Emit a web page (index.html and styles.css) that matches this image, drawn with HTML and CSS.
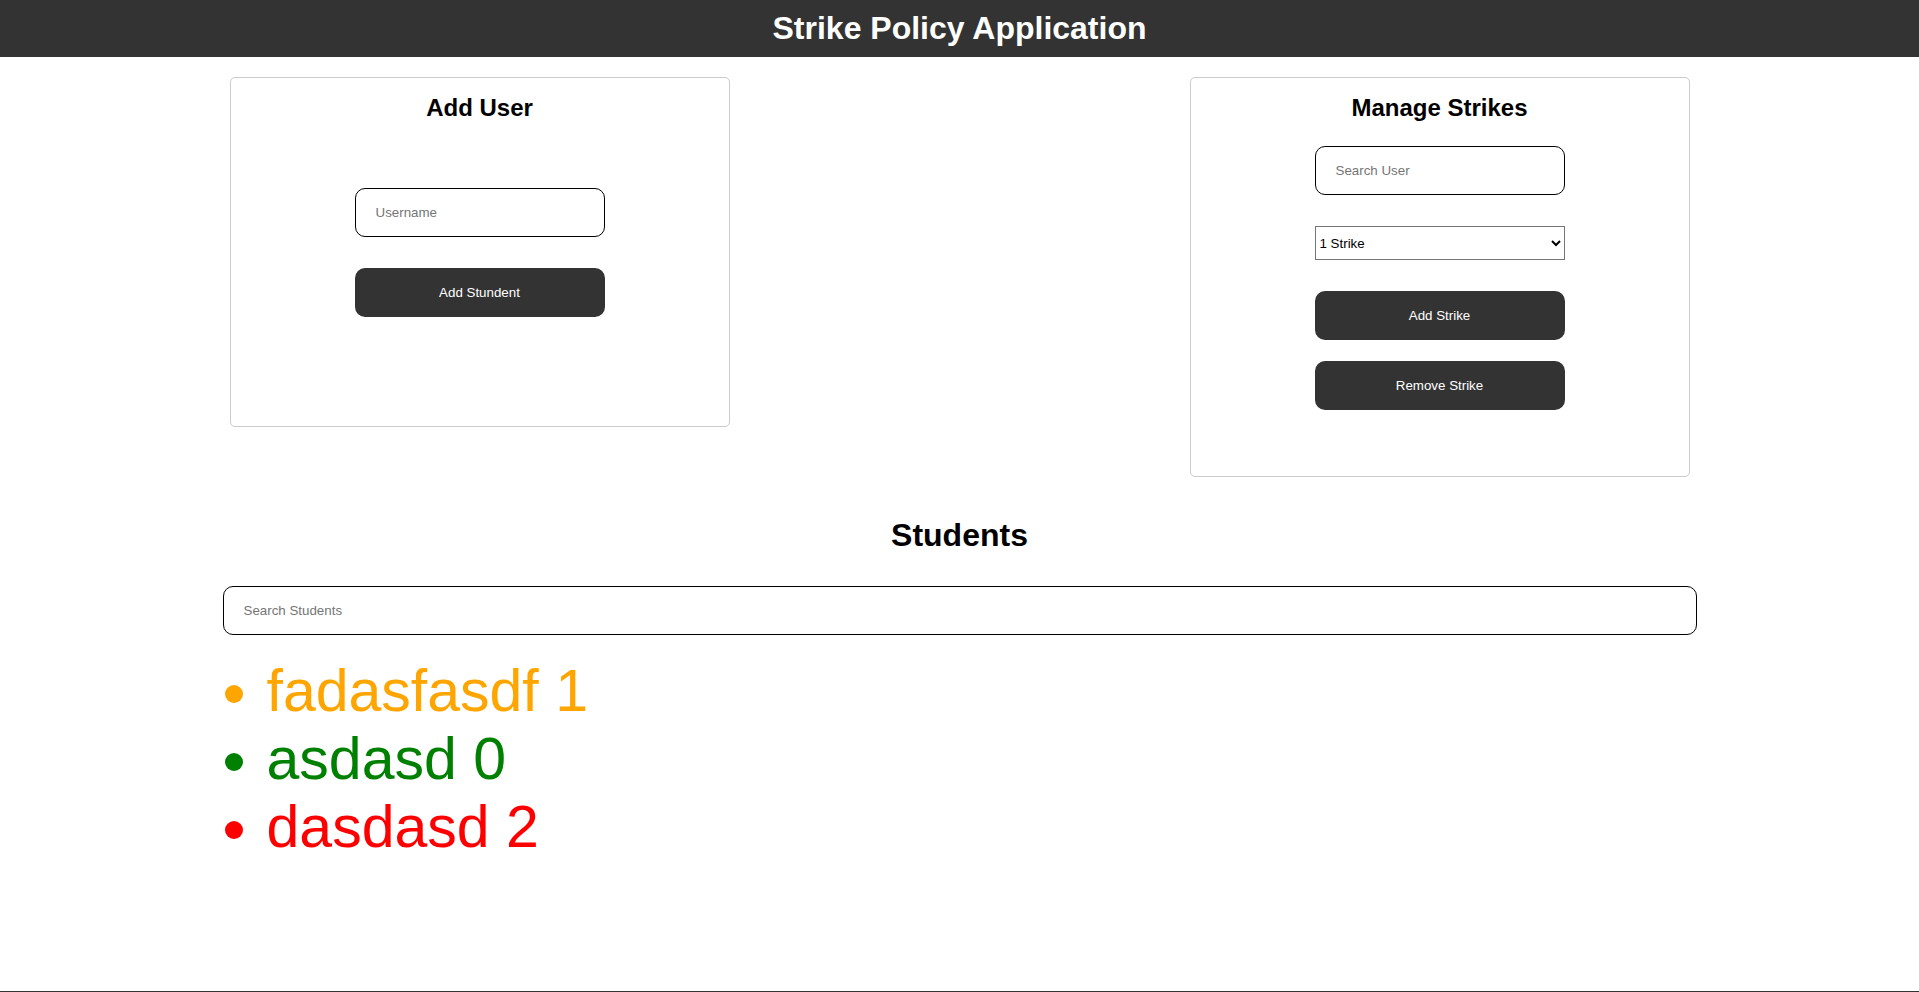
FILE: index.html
```html
<!DOCTYPE html>
<html lang="en">
<head>
<meta charset="utf-8">
<title>Strike Policy Application</title>
<link rel="stylesheet" href="styles.css">
</head>
<body>
<div class="page-body">
  <header class="app-header">
    <h1 class="app-title">Strike Policy Application</h1>
  </header>
  <main class="container">
    <section class="panels">
      <div class="card card-add">
        <h2 class="card-title">Add User</h2>
        <input class="field username-field" type="text" placeholder="Username">
        <button class="btn add-student-btn">Add Stundent</button>
      </div>
      <div class="card card-strikes">
        <h2 class="card-title">Manage Strikes</h2>
        <input class="field search-user-field" type="text" placeholder="Search User">
        <select class="strike-select">
          <option>1 Strike</option>
          <option>2 Strikes</option>
          <option>3 Strikes</option>
        </select>
        <button class="btn add-strike-btn">Add Strike</button>
        <button class="btn remove-strike-btn">Remove Strike</button>
      </div>
    </section>
    <section class="students">
      <h1 class="students-title">Students</h1>
      <input class="field search-students" type="text" placeholder="Search Students">
      <ul class="student-list">
        <li class="student strikes-1">fadasfasdf 1</li>
        <li class="student strikes-0">asdasd 0</li>
        <li class="student strikes-2">dasdasd 2</li>
      </ul>
    </section>
  </main>
</div>
<footer class="app-footer"></footer>
</body>
</html>
```

FILE: styles.css
```css
html, body {
  margin: 0;
  padding: 0;
  background: #fff;
}

body {
  font-family: "Liberation Sans", Arial, sans-serif;
  color: #000;
}

.page-body {
  min-height: 991px;
  display: flex;
  flex-direction: column;
}

.app-header {
  background: #333;
  padding: 10px;
}

.app-title {
  margin: 0;
  color: #fff;
  font-size: 32px;
  font-weight: bold;
  text-align: center;
  line-height: normal;
}

.container {
  flex: 1;
  width: 1474px;
  margin: 0 auto;
}

.panels {
  display: flex;
  justify-content: space-between;
  align-items: flex-start;
  padding: 0 7px;
  margin-top: 20px;
}

.card {
  width: 500px;
  box-sizing: border-box;
  border: 1px solid #ccc;
  border-radius: 5px;
  display: flex;
  flex-direction: column;
  align-items: center;
  padding-top: 16px;
}

.card-add {
  padding-bottom: 109px;
}

.card-strikes {
  padding-bottom: 66px;
}

.card-title {
  margin: 0;
  font-size: 24px;
  font-weight: bold;
  line-height: normal;
}

.field {
  box-sizing: border-box;
  height: 49px;
  padding: 0 20px;
  border: 1px solid #000;
  border-radius: 10px;
  font-family: "Liberation Sans", Arial, sans-serif;
  font-size: 13.33px;
  color: #000;
  background: #fff;
  outline: none;
}

.field::placeholder {
  color: #757575;
}

.username-field,
.search-user-field {
  width: 250px;
}

.username-field {
  margin-top: 66px;
}

.search-user-field {
  margin-top: 24px;
}

.strike-select {
  box-sizing: border-box;
  width: 250px;
  height: 34px;
  margin-top: 31px;
  border: 1px solid #767676;
  border-radius: 0;
  background: #fff;
  font-family: "Liberation Sans", Arial, sans-serif;
  font-size: 13.33px;
  color: #000;
}

.btn {
  box-sizing: border-box;
  width: 250px;
  height: 49px;
  border: none;
  border-radius: 10px;
  background: #333;
  color: #fff;
  font-family: "Liberation Sans", Arial, sans-serif;
  font-size: 13.33px;
  cursor: pointer;
}

.add-student-btn {
  margin-top: 31px;
}

.add-strike-btn {
  margin-top: 31px;
}

.remove-strike-btn {
  margin-top: 21px;
}

.students {
  margin-top: 40px;
}

.students-title {
  margin: 0;
  font-size: 32px;
  font-weight: bold;
  text-align: center;
  line-height: normal;
}

.search-students {
  display: block;
  width: 100%;
  margin-top: 32px;
}

.student-list {
  margin: 22px 0 0;
  padding-left: 44px;
  font-size: 59px;
  line-height: normal;
}

.strikes-0 {
  color: green;
}

.strikes-1 {
  color: orange;
}

.strikes-2 {
  color: red;
}

.app-footer {
  background: #333;
  height: 40px;
}
```
